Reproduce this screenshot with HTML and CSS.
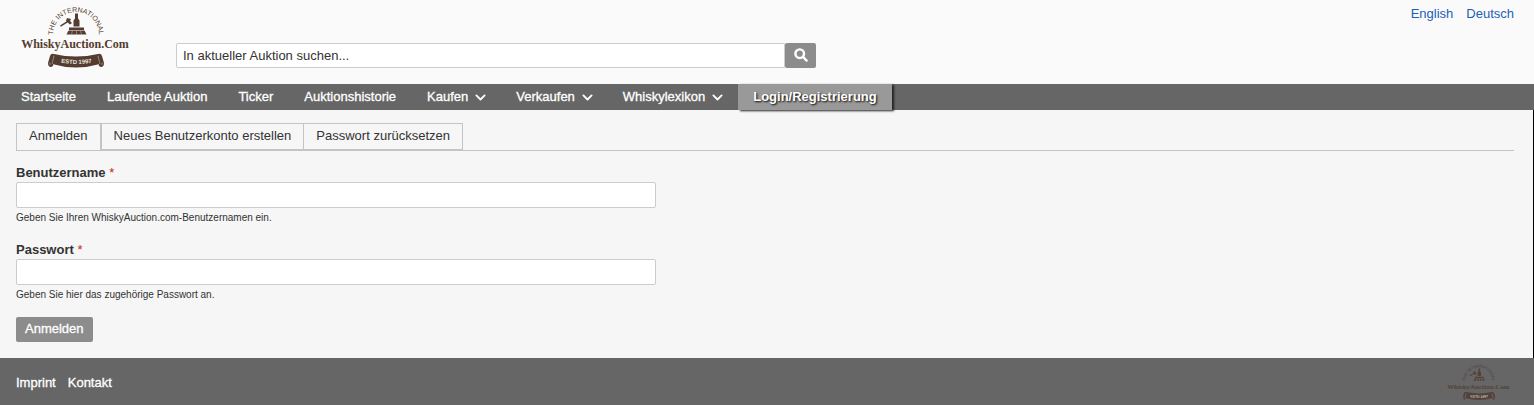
FILE: index.html
```html
<!DOCTYPE html>
<html lang="de">
<head>
<meta charset="utf-8">
<title>Anmelden | WhiskyAuction.Com</title>
<link rel="stylesheet" href="styles.css">
</head>
<body>
<header class="header">
  <a class="logo" href="#" aria-label="WhiskyAuction.Com">
    <svg class="logo-image" viewBox="0 0 110 66">
      <defs>
        <path id="arc" d="M32 33V31A23 23 0 0 1 78 31V33"/>
        <path id="ribbon-line" d="M36 58Q55 62 75 58"/>
        <g id="brand">
          <text class="logo-arc" text-anchor="middle"><textPath href="#arc" startOffset="50%">THE INTERNATIONAL</textPath></text>
          <path d="M54 9.500h3v5l1.500 2v6h-6v-6l1.500-2zM48 23.500h15v2.500H48zM47.500 26.500h16l2 4H45.500zM46 14l4 1-1 2 2 2-2 1.500-4-3.500zM39 21.500l8-5 .8 1.200-8 5z"/>
          <path class="logo-cut" d="M51.500 26.500l-1 4M55.500 26.500v4M59.500 26.500l1 4"/>
          <text class="logo-name" x="54" y="44" text-anchor="middle">WhiskyAuction.Com</text>
          <path d="M33 50Q55 55 77 50L79 60Q55 67 31 60z"/>
          <path d="M33 50q-3-1-4 2l-2 7q0 4 3 4 3-1 2-3zM77 50q3-1 4 2l2 7q0 4-3 4-3-1-2-3z"/>
          <path class="logo-cut" d="M33 52l-2 8M77 52l2 8M28 59q2 0 1 2M82 59q-2 0-1 2"/>
          <text class="logo-year" text-anchor="middle"><textPath href="#ribbon-line" startOffset="50%">ESTD 1997</textPath></text>
        </g>
      </defs>
      <use href="#brand"/>
    </svg>
  </a>
  <form class="search">
    <input class="search-field" type="text" aria-label="Suche" value="In aktueller Auktion suchen...">
    <button class="search-button" type="button" aria-label="Suchen">
      <svg class="search-icon" viewBox="0 0 14 14"><circle cx="5.700" cy="5.700" r="4.300"/><path d="M9.200 9.200l3.400 3.400"/></svg>
    </button>
  </form>
  <nav class="languages" aria-label="Sprache"><a href="#">English</a><a href="#">Deutsch</a></nav>
</header>
<nav class="menu" aria-label="Hauptmenü">
  <a href="#">Startseite</a>
  <a href="#">Laufende Auktion</a>
  <a href="#">Ticker</a>
  <a href="#">Auktionshistorie</a>
  <a class="parent" href="#">Kaufen<svg class="chevron" viewBox="0 0 12 8"><path d="M1.500 1.500L6 6l4.500-4.500"/></svg></a>
  <a class="parent" href="#">Verkaufen<svg class="chevron" viewBox="0 0 12 8"><path d="M1.500 1.500L6 6l4.500-4.500"/></svg></a>
  <a class="parent" href="#">Whiskylexikon<svg class="chevron" viewBox="0 0 12 8"><path d="M1.500 1.500L6 6l4.500-4.500"/></svg></a>
  <a class="login" href="#">Login/Registrierung</a>
</nav>
<main class="main">
  <nav class="tabs" aria-label="Benutzerkonto">
    <a class="tab tab-active" href="#">Anmelden</a>
    <a class="tab" href="#">Neues Benutzerkonto erstellen</a>
    <a class="tab" href="#">Passwort zurücksetzen</a>
  </nav>
  <form class="form">
    <div class="field">
      <label for="name">Benutzername <span class="required">*</span></label>
      <input id="name" type="text">
      <p class="hint">Geben Sie Ihren WhiskyAuction.com-Benutzernamen ein.</p>
    </div>
    <div class="field">
      <label for="pass">Passwort <span class="required">*</span></label>
      <input id="pass" type="password">
      <p class="hint">Geben Sie hier das zugehörige Passwort an.</p>
    </div>
    <button class="submit" type="button">Anmelden</button>
  </form>
</main>
<footer class="footer">
  <nav class="footer-links" aria-label="Fußzeile"><a href="#">Imprint</a><a href="#">Kontakt</a></nav>
  <svg class="footer-logo" viewBox="0 0 110 66" aria-hidden="true"><use href="#brand"/></svg>
</footer>
</body>
</html>
```
FILE: styles.css
```css
* { box-sizing: border-box; }
body {
  margin: 0;
  min-height: 100vh;
  display: flex;
  flex-direction: column;
  background: #f6f6f6;
  color: #333;
  font: 13px/20px "Liberation Sans", Arial, sans-serif;
}
a { color: inherit; text-decoration: none; }
input, button { font: inherit; color: inherit; }

.header {
  display: flex;
  align-items: flex-start;
  padding: 4px 20px 0 21px;
  height: 84px;
  background: #fafafa;
}
.logo { width: 155px; }
.logo-image { display: block; width: 110px; fill: #543c30; }
.logo-arc { font: 7px "Liberation Sans", sans-serif; }
.logo-name { font: bold 12px "Liberation Serif", serif; }
.logo-year { font: bold 6px "Liberation Sans", sans-serif; fill: #e8e2de; }
.logo-cut { fill: none; stroke: #b8aea7; stroke-width: 0.6; }

.search { display: flex; width: 640px; margin-top: 39px; }
.search-field {
  flex: 1;
  height: 25px;
  padding: 0 6px;
  border: 1px solid #ccc;
  border-radius: 2px 0 0 2px;
  background: #fff;
}
.search-button {
  display: grid;
  place-items: center;
  width: 31px;
  padding: 0 0 2px;
  border: 0;
  border-radius: 2px;
  background: #8c8c8c;
}
.search-icon { width: 14px; fill: none; stroke: #fff; stroke-width: 2.4; stroke-linecap: round; }
.languages { display: flex; gap: 13px; margin-left: auto; color: #1a5fb8; }

.menu {
  display: flex;
  height: 26px;
  padding-left: 6px;
  background: #666;
  color: #fff;
  line-height: 26px;
  -webkit-text-stroke: 0.3px #fff;
}
.menu a { padding: 0 16px 0 15px; }
.menu .parent { padding-right: 15px; }
.chevron {
  width: 11px;
  margin-left: 7px;
  fill: none;
  stroke: #fff;
  stroke-width: 2;
  stroke-linecap: round;
  stroke-linejoin: round;
}
.menu .login {
  padding: 0 15px;
  background: #999;
  font-weight: bold;
  text-shadow: 1px 1px 2px #000;
  box-shadow: 2px 1px 2px #222;
  -webkit-text-stroke: 0;
}

.main {
  flex: 1;
  padding: 13px 19px 16px 16px;
  border-right: 1px solid #000;
}
.tabs { display: flex; border-bottom: 1px solid #c4c4c4; }
.tab {
  height: 27px;
  padding: 0 12px;
  border: 1px solid #c4c4c4;
  border-left-width: 0;
  line-height: 24px;
}
.tab-active { border-width: 1px 1px 0; }
.tab-active + .tab { border-left-width: 1px; }
.form { padding-top: 12px; }
.field { max-width: 640px; margin-bottom: 16px; }
.field label { display: block; height: 19px; font-weight: bold; }
.required { color: #c22; font-weight: normal; }
.field input {
  display: block;
  width: 100%;
  height: 26px;
  border: 1px solid #ccc;
  border-radius: 2px;
  background: #fff;
}
.hint { margin: 4px 0 0; font-size: 10px; line-height: 12px; }
.submit {
  height: 25px;
  padding: 0 9px 2px;
  border: 0;
  border-radius: 2px;
  background: #8c8c8c;
  color: #fff;
  -webkit-text-stroke: 0.3px #fff;
}

.footer {
  display: flex;
  align-items: center;
  justify-content: space-between;
  height: 47px;
  padding: 2px 23px 0 16px;
  background: #666;
  color: #fff;
}
.footer-links { display: flex; gap: 12px; -webkit-text-stroke: 0.3px #fff; }
.footer-logo { width: 64px; fill: #4b3428; opacity: 0.7; }
```
